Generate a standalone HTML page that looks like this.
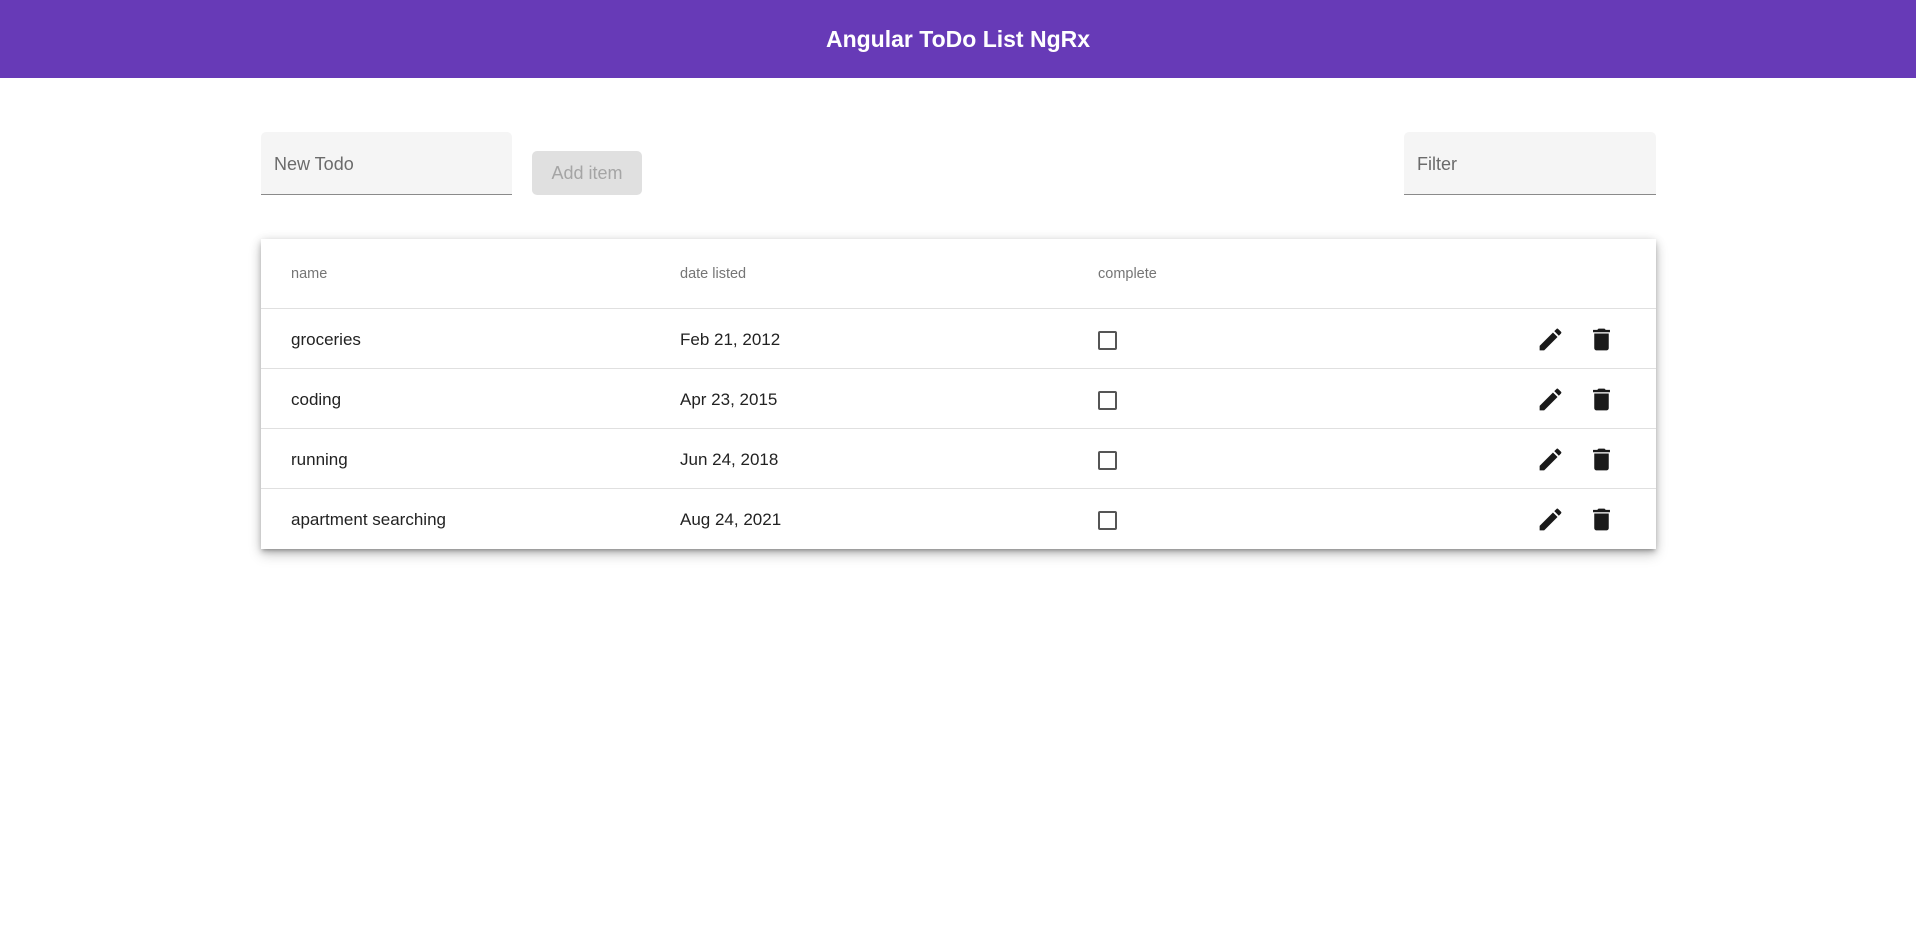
<!DOCTYPE html>
<html><head><meta charset="utf-8"><style>
*{box-sizing:border-box;margin:0;padding:0}
body{width:1916px;height:939px;background:#fff;font-family:"Liberation Sans",Arial,sans-serif;position:relative;overflow:hidden}
.hdr{position:absolute;left:0;top:0;width:1916px;height:78px;background:#673ab7;color:#fff;font-weight:bold;font-size:23px;text-align:center;line-height:78px}
.inp{position:absolute;top:132px;height:63px;background:#f5f5f5;border-bottom:1px solid #8a8a8a;border-radius:5px 5px 0 0;color:#6b6b6b;font-size:18px;padding:22px 0 0 13px}
.btn{position:absolute;left:532px;top:151px;width:110px;height:44px;background:#e0e0e0;border-radius:5px;color:#a5a5a5;font-size:18px;text-align:center;line-height:44px}
.card{position:absolute;left:261px;top:239px;width:1395px;height:310px;background:#fff;box-shadow:0 3px 3px -2px rgba(0,0,0,.2),0 3px 5px 0 rgba(0,0,0,.14),0 1px 10px 0 rgba(0,0,0,.12),0 6px 12px rgba(0,0,0,.18)}
.row{position:absolute;left:0;width:1395px;border-bottom:1px solid #e0e0e0;font-size:17px;color:#222}
.row span{position:absolute}
.h{top:0;height:70px;font-size:14.5px;color:#757575}
.h span{top:27px}
.c1{left:30px}.c2{left:419px}.c3{left:837px}
.t{top:21px}
.cb{position:absolute;left:837px;top:22px;width:19px;height:19px;border:2px solid #555;border-radius:2px}
svg{position:absolute}
</style></head><body>
<div class="hdr">Angular ToDo List NgRx</div>
<div class="inp" style="left:261px;width:251px">New Todo</div>
<div class="btn">Add item</div>
<div class="inp" style="left:1404px;width:252px">Filter</div>
<div class="card">
<div class="row h"><span class="c1">name</span><span class="c2">date listed</span><span class="c3">complete</span></div>
<div class="row" style="top:70px;height:60px"><span class="c1 t">groceries</span><span class="c2 t">Feb 21, 2012</span><div class="cb"></div>
<svg style="left:1275px;top:16px" width="29" height="29" viewBox="0 0 24 24"><path fill="#1a1a1a" d="M3 17.25V21h3.75L17.81 9.94l-3.75-3.75L3 17.25zM20.71 7.04a1 1 0 000-1.41l-2.34-2.34a1 1 0 00-1.41 0l-1.83 1.83 3.75 3.75 1.83-1.83z"/></svg>
<svg style="left:1326px;top:16px" width="29" height="29" viewBox="0 0 24 24"><path fill="#1a1a1a" d="M6 19c0 1.1.9 2 2 2h8c1.1 0 2-.9 2-2V7H6v12zM19 4h-3.5l-1-1h-5l-1 1H5v2h14V4z"/></svg></div>
<div class="row" style="top:130px;height:60px"><span class="c1 t">coding</span><span class="c2 t">Apr 23, 2015</span><div class="cb"></div>
<svg style="left:1275px;top:16px" width="29" height="29" viewBox="0 0 24 24"><path fill="#1a1a1a" d="M3 17.25V21h3.75L17.81 9.94l-3.75-3.75L3 17.25zM20.71 7.04a1 1 0 000-1.41l-2.34-2.34a1 1 0 00-1.41 0l-1.83 1.83 3.75 3.75 1.83-1.83z"/></svg>
<svg style="left:1326px;top:16px" width="29" height="29" viewBox="0 0 24 24"><path fill="#1a1a1a" d="M6 19c0 1.1.9 2 2 2h8c1.1 0 2-.9 2-2V7H6v12zM19 4h-3.5l-1-1h-5l-1 1H5v2h14V4z"/></svg></div>
<div class="row" style="top:190px;height:60px"><span class="c1 t">running</span><span class="c2 t">Jun 24, 2018</span><div class="cb"></div>
<svg style="left:1275px;top:16px" width="29" height="29" viewBox="0 0 24 24"><path fill="#1a1a1a" d="M3 17.25V21h3.75L17.81 9.94l-3.75-3.75L3 17.25zM20.71 7.04a1 1 0 000-1.41l-2.34-2.34a1 1 0 00-1.41 0l-1.83 1.83 3.75 3.75 1.83-1.83z"/></svg>
<svg style="left:1326px;top:16px" width="29" height="29" viewBox="0 0 24 24"><path fill="#1a1a1a" d="M6 19c0 1.1.9 2 2 2h8c1.1 0 2-.9 2-2V7H6v12zM19 4h-3.5l-1-1h-5l-1 1H5v2h14V4z"/></svg></div>
<div class="row" style="top:250px;height:60px;border:none"><span class="c1 t">apartment searching</span><span class="c2 t">Aug 24, 2021</span><div class="cb"></div>
<svg style="left:1275px;top:16px" width="29" height="29" viewBox="0 0 24 24"><path fill="#1a1a1a" d="M3 17.25V21h3.75L17.81 9.94l-3.75-3.75L3 17.25zM20.71 7.04a1 1 0 000-1.41l-2.34-2.34a1 1 0 00-1.41 0l-1.83 1.83 3.75 3.75 1.83-1.83z"/></svg>
<svg style="left:1326px;top:16px" width="29" height="29" viewBox="0 0 24 24"><path fill="#1a1a1a" d="M6 19c0 1.1.9 2 2 2h8c1.1 0 2-.9 2-2V7H6v12zM19 4h-3.5l-1-1h-5l-1 1H5v2h14V4z"/></svg></div>
</div>
</body></html>
